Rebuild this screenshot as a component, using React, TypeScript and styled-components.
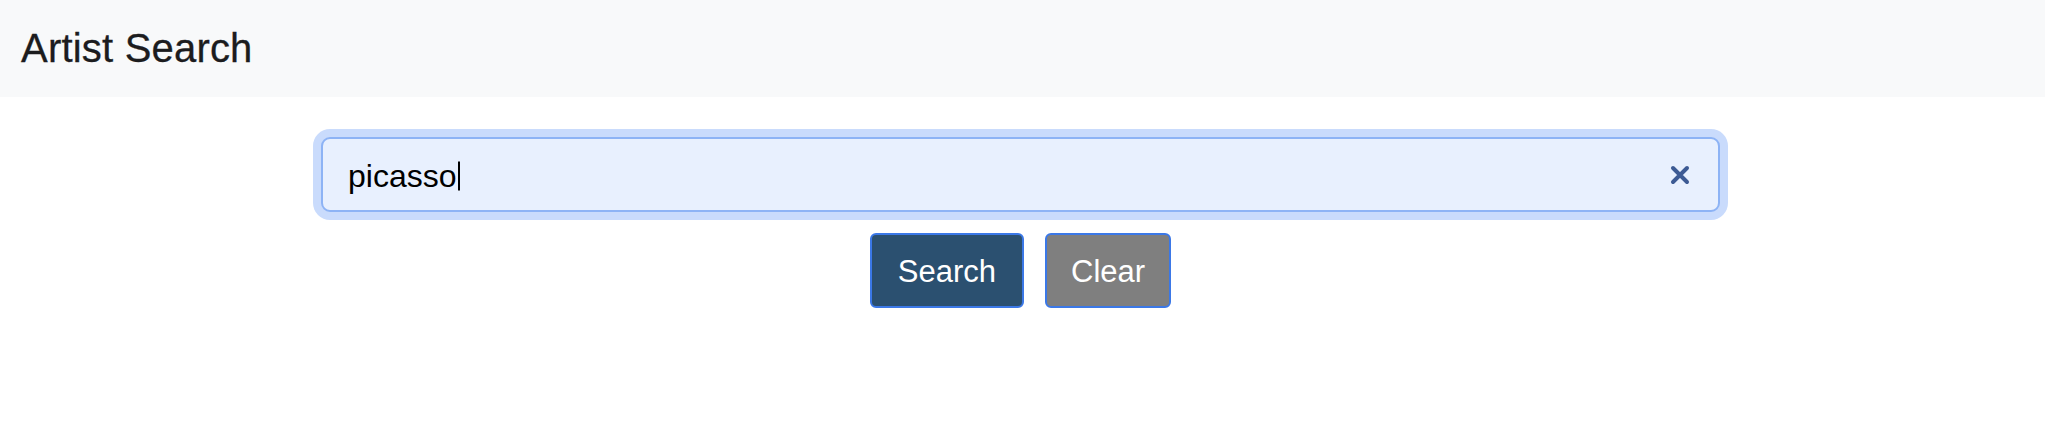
import React, { useState } from 'react';
import styled, { createGlobalStyle } from 'styled-components';

const GlobalStyle = createGlobalStyle`
	body {
		margin: 0;
		background: #ffffff;
		font-family: 'Liberation Sans', Arial, sans-serif;
		color: #212529;
	}
`;

const Header = styled.header`
	height: 97px;
	background: #f8f9fa;
	display: flex;
	align-items: center;
	padding-left: 21px;
`;

const Brand = styled.h1`
	margin: 0;
	font-size: 40px;
	font-weight: 400;
	color: #1c1c1e;
	letter-spacing: 0.2px;
	-webkit-text-stroke: 0.3px #1c1c1e;
`;

const Main = styled.main`
	display: flex;
	flex-direction: column;
	align-items: center;
	padding: 40px 4px 0 0;
	gap: 21px;
`;

const Field = styled.div`
	width: 1399px;
	height: 75px;
	box-sizing: border-box;
	display: flex;
	align-items: center;
	padding: 0 28px 0 25px;
	background: #e8f0fe;
	border: 2px solid #8db3f5;
	border-radius: 9px;
	box-shadow: 0 0 0 8px #c9dbfc;
`;

const InputWrap = styled.div`
	flex: 1;
	position: relative;
	display: flex;
	align-items: center;
	padding-top: 3px;
`;

const SearchInput = styled.input`
	flex: 1;
	border: none;
	outline: none;
	background: transparent;
	font-family: 'Liberation Sans', Arial, sans-serif;
	font-size: 32px;
	color: #000;
	caret-color: transparent;
	padding: 0;
`;

const CaretMirror = styled.span`
	position: absolute;
	left: 0;
	top: 50%;
	transform: translateY(-50%);
	margin-top: 1px;
	font-family: 'Liberation Sans', Arial, sans-serif;
	font-size: 32px;
	color: transparent;
	white-space: pre;
	pointer-events: none;
	display: flex;
	align-items: center;
	&::after {
		content: '';
		width: 2px;
		height: 29px;
		margin-left: 1px;
		background: #000;
	}
`;

const ClearIcon = styled.button`
	border: none;
	background: none;
	padding: 0;
	display: flex;
	cursor: pointer;
	svg {
		width: 20px;
		height: 20px;
	}
`;

const Actions = styled.div`
	display: flex;
	gap: 21px;
`;

const Button = styled.button<{ $variant: 'primary' | 'secondary' }>`
	height: 75px;
	box-sizing: border-box;
	padding: 3px ${(p) => (p.$variant === 'primary' ? '26px' : '24px')} 0;
	border: 2px solid #3b78e7;
	border-radius: 6px;
	background: ${(p) => (p.$variant === 'primary' ? '#2b5070' : '#7f7f7f')};
	color: #ffffff;
	font-family: 'Liberation Sans', Arial, sans-serif;
	font-size: 31px;
	cursor: pointer;
`;

const App = () => {
	const [query, setQuery] = useState('picasso');

	return (
		<>
			<GlobalStyle />
			<Header>
				<Brand>Artist Search</Brand>
			</Header>
			<Main>
				<Field>
					<InputWrap>
						<SearchInput value={query} onChange={(e) => setQuery(e.target.value)} />
						<CaretMirror aria-hidden>{query}</CaretMirror>
					</InputWrap>
					<ClearIcon aria-label="clear" onClick={() => setQuery('')}>
						<svg viewBox="0 0 20 20">
							<path d="M3 3 L17 17 M17 3 L3 17" stroke="#3c5a94" strokeWidth="4" strokeLinecap="round" />
						</svg>
					</ClearIcon>
				</Field>
				<Actions>
					<Button $variant="primary">Search</Button>
					<Button $variant="secondary" onClick={() => setQuery('')}>
						Clear
					</Button>
				</Actions>
			</Main>
		</>
	);
};

export default App;
